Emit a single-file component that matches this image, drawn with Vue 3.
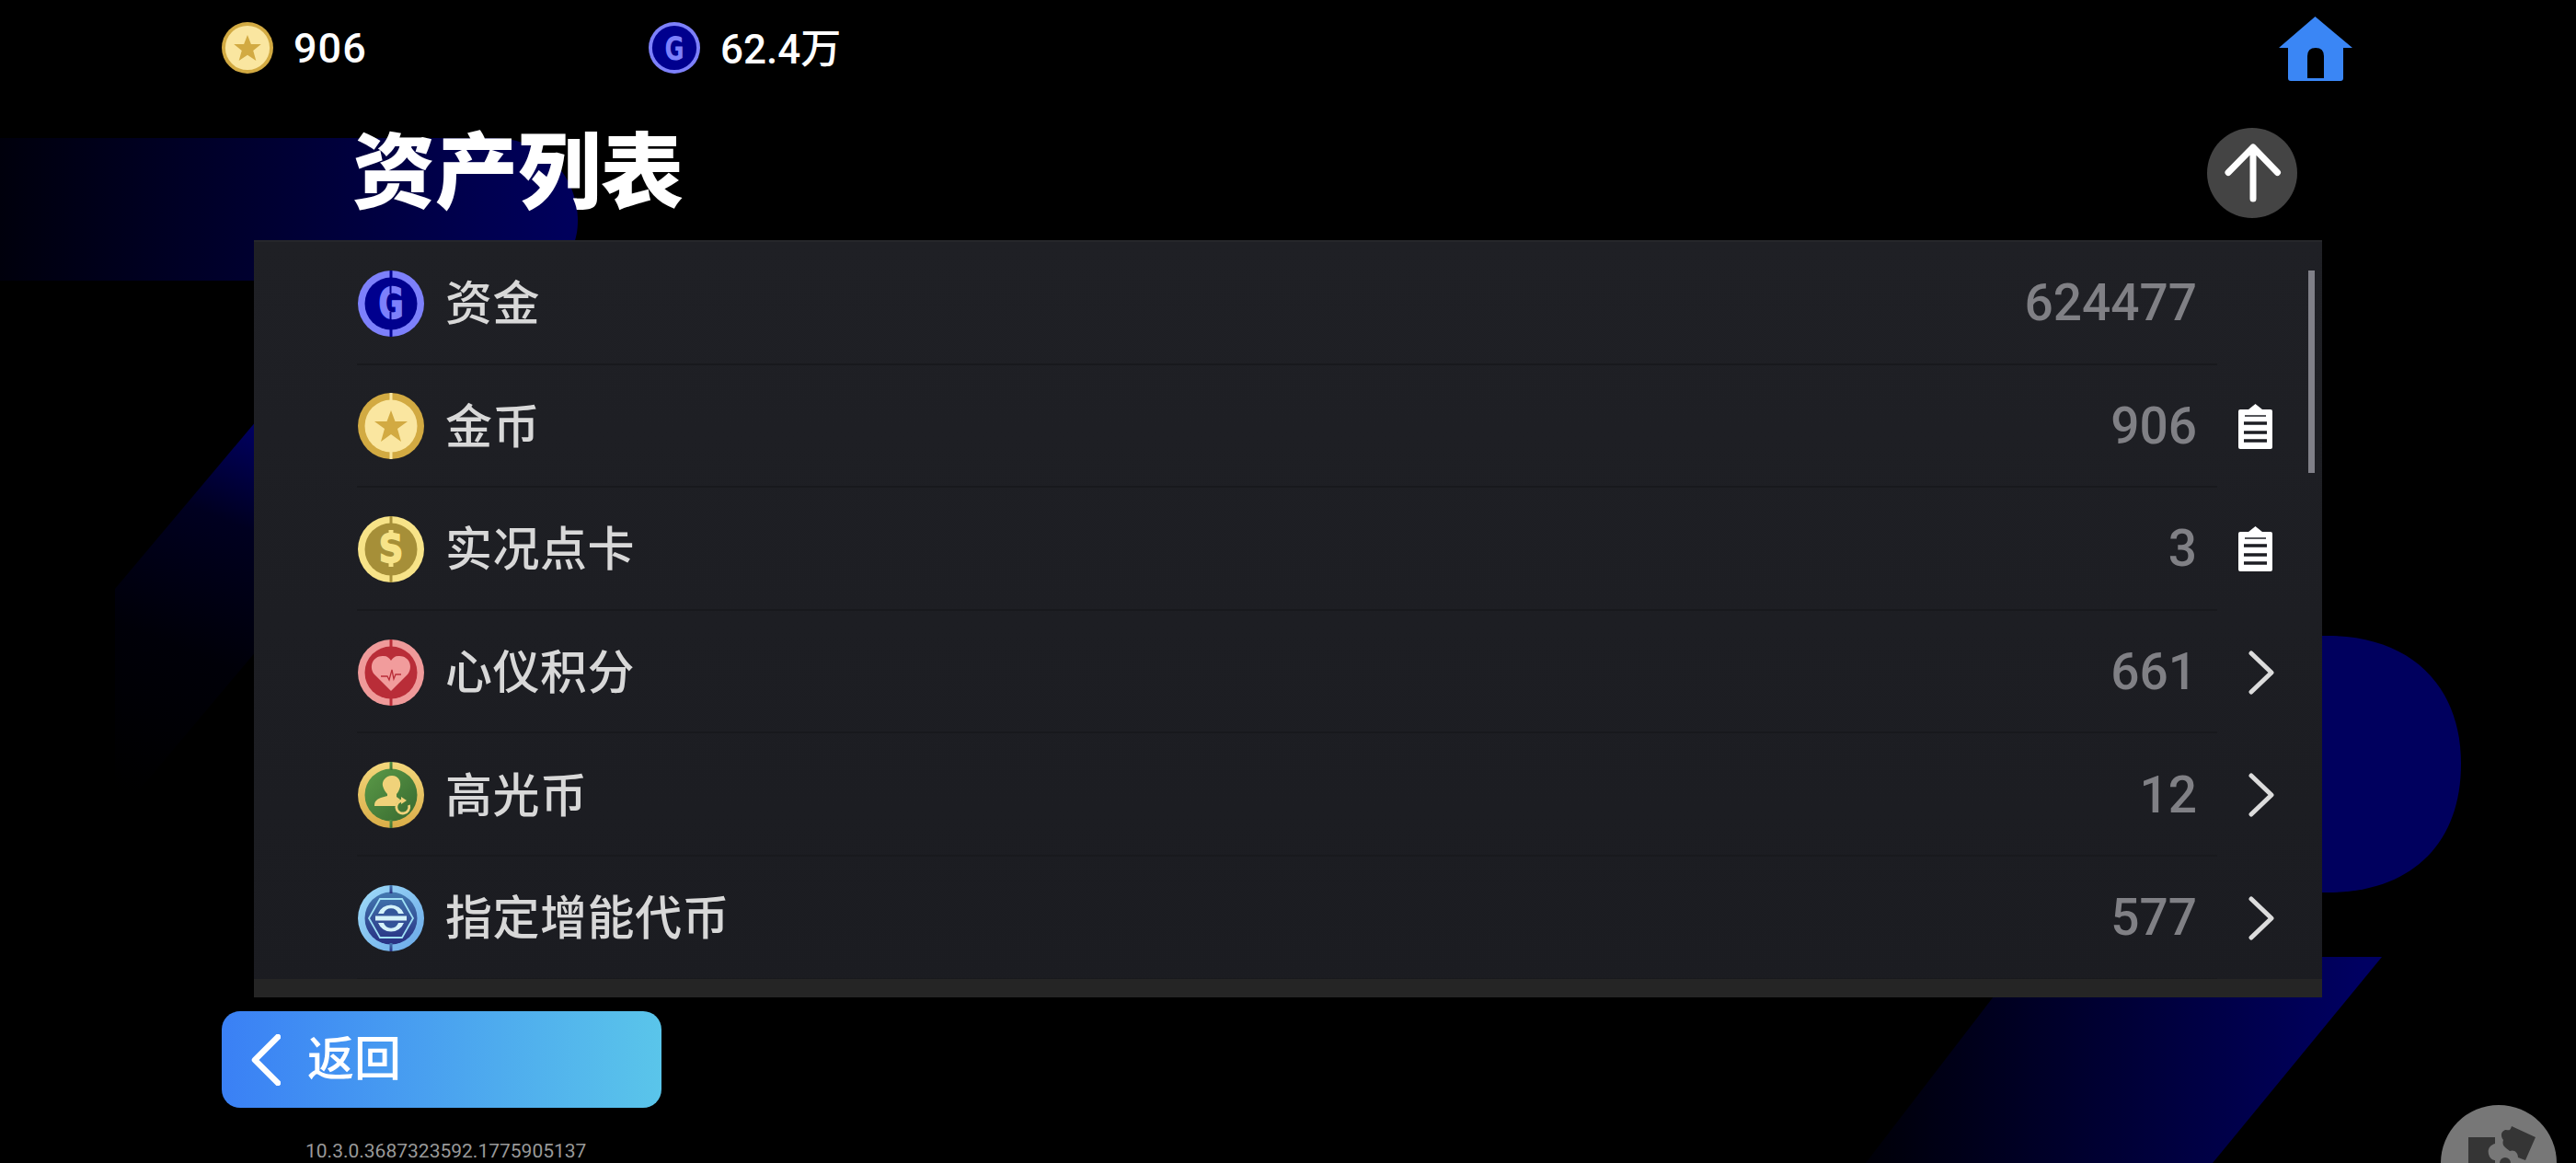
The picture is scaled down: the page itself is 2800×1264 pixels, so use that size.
<script setup>
const assets = [
  { name: '资金', value: '624477', icon: 'g', action: '' },
  { name: '金币', value: '906', icon: 'star', action: 'clip' },
  { name: '实况点卡', value: '3', icon: 'dollar', action: 'clip' },
  { name: '心仪积分', value: '661', icon: 'heart', action: 'more' },
  { name: '高光币', value: '12', icon: 'person', action: 'more' },
  { name: '指定增能代币', value: '577', icon: 'hex', action: 'more' },
]

const coinColors = {
  g: { ring: '#7d80fb', inner: '#00008e' },
  star: { ring: '#d2aa42', inner: '#fae6a0' },
  dollar: { ring: '#f7e388', inner: '#a68f38' },
  heart: { ring: '#ef9a9a', inner: '#b92d38' },
  person: { ring: 'url(#goldRing)', inner: 'url(#greenFill)' },
  hex: { ring: 'url(#blueRing)', inner: 'url(#blueFill)' },
}
</script>

<template>
  <div class="page">
    <svg class="backdrop" width="2800" height="1264" viewBox="0 0 2800 1264">
      <defs>
        <linearGradient id="bgTop" gradientUnits="userSpaceOnUse" x1="0" y1="0" x2="620" y2="0">
          <stop offset="0" stop-color="#00000c" />
          <stop offset="1" stop-color="#00005c" />
        </linearGradient>
        <linearGradient id="bgLeft" gradientUnits="userSpaceOnUse" x1="290" y1="470" x2="130" y2="860">
          <stop offset="0" stop-color="#000060" />
          <stop offset="0.25" stop-color="#000020" />
          <stop offset="0.6" stop-color="#000008" />
          <stop offset="1" stop-color="#000000" />
        </linearGradient>
        <linearGradient id="bgSlash" gradientUnits="userSpaceOnUse" x1="2030" y1="0" x2="2570" y2="0">
          <stop offset="0" stop-color="#000008" />
          <stop offset="1" stop-color="#000062" />
        </linearGradient>
      </defs>
      <path d="M0 150H535C595 150 628 195 628 240C628 280 600 305 560 305H0Z" fill="url(#bgTop)" />
      <path d="M125 640L300 432V682L125 890Z" fill="url(#bgLeft)" />
      <path d="M2400 691H2530C2620 691 2675 745 2675 830C2675 918 2620 970 2530 970H2400Z" fill="#00005e" />
      <path d="M2200 1040H2589L2405 1264H2028Z" fill="url(#bgSlash)" />
    </svg>

    <div class="content">
      <header class="topbar">
        <div class="stat stat-gold">
          <svg class="stat-icon" viewBox="0 0 72 72">
            <circle cx="36" cy="36" r="36" fill="#d2aa42" />
            <circle cx="36" cy="36" r="31" fill="#fae6a0" />
            <polygon points="36,18 41,31 55,31 44,40 48,54 36,46 24,54 28,40 17,31 31,31" fill="#d2aa42" />
          </svg>
          <span>906</span>
        </div>
        <div class="stat stat-cash">
          <svg class="stat-icon" viewBox="0 0 72 72">
            <circle cx="36" cy="36" r="36" fill="#7d80fb" />
            <circle cx="36" cy="36" r="31" fill="#00008e" />
            <text transform="translate(36 53) scale(0.72 1)" class="coin-letter" fill="#7d80fb">G</text>
          </svg>
          <span>62.4万</span>
        </div>
        <svg class="home" width="80" height="70" viewBox="0 0 80 70">
          <path d="M39.500 0L80 34H70V67Q70 70 67 70H13Q10 70 10 67V34H0Z" fill="#3a86f5" />
          <path d="M31 67V43Q31 34 40 34Q49 34 49 43V67Z" fill="#000" />
        </svg>
      </header>

      <div class="title-row">
        <h1>资产列表</h1>
        <button class="up-btn">
          <svg width="98" height="98" viewBox="0 0 98 98">
            <path d="M50 77V21M23 48.500L50 21L76.500 48.500" fill="none" stroke="#fff" stroke-width="7" stroke-linecap="round" stroke-linejoin="round" />
          </svg>
        </button>
      </div>

      <section class="panel">
        <div class="list">
          <div v-for="item in assets" :key="item.name" class="row">
            <svg class="coin" width="72" height="72" viewBox="0 0 72 72">
              <defs>
                <linearGradient id="goldRing" x1="0" y1="0" x2="0" y2="1">
                  <stop offset="0" stop-color="#f3d77c" />
                  <stop offset="1" stop-color="#d9ad48" />
                </linearGradient>
                <linearGradient id="greenFill" x1="0" y1="0" x2="1" y2="1">
                  <stop offset="0" stop-color="#5b9a48" />
                  <stop offset="1" stop-color="#37692f" />
                </linearGradient>
                <linearGradient id="blueRing" x1="0" y1="0" x2="1" y2="1">
                  <stop offset="0" stop-color="#a0dcf8" />
                  <stop offset="1" stop-color="#69a8e8" />
                </linearGradient>
                <linearGradient id="blueFill" x1="0" y1="0" x2="0" y2="1">
                  <stop offset="0" stop-color="#4379b0" />
                  <stop offset="1" stop-color="#282f82" />
                </linearGradient>
              </defs>
              <circle cx="36" cy="36" r="36" :fill="coinColors[item.icon].ring" />
              <circle cx="36" cy="36" r="28.500" :fill="coinColors[item.icon].inner" />
              <rect x="34.500" y="0" width="3" height="9" :fill="coinColors[item.icon].inner" />
              <rect x="34.500" y="63" width="3" height="9" :fill="coinColors[item.icon].inner" />

              <template v-if="item.icon === 'g'">
                <text transform="translate(36 52) scale(0.72 1)" class="coin-letter coin-thick" fill="#7d80fb" stroke="#7d80fb">G</text>
                <rect x="34.500" y="16" width="2" height="9" fill="#00008e" />
                <rect x="34.500" y="45" width="2" height="9" fill="#00008e" />
              </template>
              <polygon v-else-if="item.icon === 'star'" points="36,19 40.500,31 54,31 43,39 47,53 36,45 25,53 29,39 18,31 31.500,31" fill="#d2aa42" />
              <template v-else-if="item.icon === 'dollar'">
                <text transform="translate(36 50) scale(0.86 1)" class="coin-letter coin-s coin-thick" fill="#f7e388" stroke="#f7e388">S</text>
                <rect x="33.500" y="15" width="5" height="5" fill="#f7e388" />
                <rect x="33.500" y="50" width="5" height="5" fill="#f7e388" />
              </template>
              <template v-else-if="item.icon === 'heart'">
                <path d="M36 56L18 38C11 29 17 17 28 18C32 18 34 20 36 23C38 20 40 18 44 18C55 17 61 29 54 38Z" fill="#f19c9c" />
                <path d="M25 40H32L34 44L37 33L39 43L41 38H47" fill="none" stroke="#b92d38" stroke-width="1.300" />
              </template>
              <template v-else-if="item.icon === 'person'">
                <path d="M37 15C44 15 47 21 46 27C45 31 43 34 42 35V38L46 41C42 44 41 46 41 48H18C18 43 20 41 25 39L32 37V35C30 33 28 30 27 26C26 21 30 15 37 15Z" fill="#f0d27a" />
                <path d="M55.500 47A7 7 0 1 1 49 42" fill="none" stroke="#f0d27a" stroke-width="2.800" />
                <path d="M47 38L53 42L47 46Z" fill="#f0d27a" />
              </template>
              <template v-else-if="item.icon === 'hex'">
                <polygon points="24,15 48,15 60,36 48,57 24,57 12,36" fill="none" stroke="#9fe0f5" stroke-width="1.800" />
                <path d="M22 31A15 15 0 0 1 50 31ZM22 41A15 15 0 0 0 50 41Z" fill="#d5f2fa" />
                <path d="M28 31A8.500 8.500 0 0 1 44 31ZM28 41A8.500 8.500 0 0 0 44 41Z" fill="#33559a" />
                <rect x="19" y="33.500" width="34" height="5" fill="#d5f2fa" />
              </template>
            </svg>
            <span class="name">{{ item.name }}</span>
            <span class="value">{{ item.value }}</span>
            <span class="action">
              <svg v-if="item.action === 'clip'" class="clip" width="37" height="49" viewBox="0 0 37 49">
                <path d="M2 6H11L18.500 0L26 6H35Q37 6 37 8V47Q37 49 35 49H2Q0 49 0 47V8Q0 6 2 6Z" fill="#fff" />
                <path d="M6 21H31M6 31H31M6 40H31" stroke="#1d1e23" stroke-width="3.500" />
                <path d="M7 13H30" stroke="#1d1e23" stroke-width="1.500" />
              </svg>
              <svg v-else-if="item.action === 'more'" width="28" height="48" viewBox="0 0 28 48">
                <path d="M3 3L25 24L3 45" fill="none" stroke="#dcdcdc" stroke-width="5" stroke-linecap="round" stroke-linejoin="round" />
              </svg>
            </span>
          </div>
        </div>
        <div class="panel-foot"></div>
        <div class="scrollbar"></div>
      </section>

      <button class="back-btn">
        <svg width="32" height="56" viewBox="0 0 32 56">
          <path d="M29 3L4 28L29 53" fill="none" stroke="#fff" stroke-width="6.500" stroke-linecap="round" stroke-linejoin="round" />
        </svg>
        <span>返回</span>
      </button>
      <div class="version">10.3.0.3687323592.1775905137</div>
    </div>

    <div class="puzzle">
      <svg width="126" height="126" viewBox="0 0 126 126">
        <path d="M30 35H59V42C52 44 50 50 53 56C55 60 59 60 59 60V92H30Z" fill="#353535" />
        <path d="M77 23L103 35L92 60L84 57C84 52 80 48 75 50C70 46 66 44 68 38C65 34 65 29 70 27C74 27 75 29 77 23Z" fill="#353535" />
        <circle cx="70" cy="63" r="6" fill="#353535" />
      </svg>
    </div>
  </div>
</template>

<style>
body {
  background: #000;
}
</style>

<style scoped>
.page {
  position: relative;
  width: 2800px;
  height: 1264px;
  overflow: hidden;
  background: #000;
  font-family: "Noto Sans CJK SC", "Noto Sans", sans-serif;
}

.backdrop {
  position: absolute;
  left: 0;
  top: 0;
}

.content {
  position: relative;
  display: flex;
  flex-direction: column;
  width: 2316px;
  height: 1264px;
  margin-left: 241px;
}

.topbar {
  display: flex;
  align-items: center;
  height: 104px;
}

.stat {
  display: flex;
  align-items: center;
  gap: 22px;
  color: #fff;
  font-family: Roboto, "Noto Sans CJK SC", sans-serif;
  font-size: 45px;
  font-weight: 500;
  letter-spacing: 1px;
}

.stat-gold {
  width: 464px;
}

.stat-cash {
  font-size: 44px;
  letter-spacing: 0;
}

.stat-cash span {
  margin-bottom: 4px;
}

.stat-icon {
  width: 56px;
  height: 56px;
}

.coin-letter {
  font-family: "DejaVu Sans", sans-serif;
  font-size: 46px;
  font-weight: 700;
  text-anchor: middle;
}

.coin-thick {
  stroke-width: 1.500px;
}

.coin-s {
  font-size: 43px;
}

.home {
  margin-left: auto;
  margin-top: 2px;
}

.title-row {
  display: flex;
  align-items: center;
  justify-content: space-between;
  height: 157px;
  padding: 0 60px 0 142px;
}

h1 {
  margin: 0 0 6px;
  color: #fff;
  font-size: 90px;
  font-weight: 900;
  line-height: 1;
}

.up-btn {
  width: 98px;
  height: 98px;
  margin-top: 10px;
  padding: 0;
  border: 0;
  border-radius: 50%;
  background: #444;
}

.up-btn svg {
  display: block;
}

.panel {
  position: relative;
  width: 2248px;
  height: 823px;
  margin-left: 35px;
  border-top: 2px solid #26272b;
  background: linear-gradient(#1f2025, #1b1c21);
  box-sizing: border-box;
}

.list {
  height: 801px;
  padding-left: 112px;
}

.row {
  display: flex;
  align-items: center;
  width: 2092px;
  height: 133.600px;
  box-sizing: border-box;
  background: linear-gradient(#18191d, #18191d) left bottom / 2022px 2px no-repeat;
}

.coin {
  flex: none;
  margin: 0 23px 0 1px;
}

.name {
  margin-bottom: 6px;
  color: #d8d8d8;
  font-size: 51px;
  font-weight: 500;
  line-height: 1;
  letter-spacing: 0.5px;
}

.value {
  margin-left: auto;
  color: #808085;
  font-family: Roboto, sans-serif;
  font-size: 55px;
  font-weight: 500;
  line-height: 1;
}

.action {
  display: flex;
  justify-content: flex-end;
  align-items: center;
  width: 84px;
  margin-right: 8px;
  height: 50px;
}

.clip {
  margin-right: 2px;
}

.panel-foot {
  height: 20px;
  background: #252525;
}

.scrollbar {
  position: absolute;
  top: 31px;
  right: 8px;
  width: 7px;
  height: 220px;
  background: #808088;
}

.back-btn {
  display: flex;
  align-items: center;
  flex: none;
  gap: 29px;
  width: 478px;
  height: 105px;
  margin-top: 15px;
  padding: 0 0 0 32px;
  border: 0;
  border-radius: 20px;
  background: linear-gradient(90deg, #3a80f5, #5ac5ea);
  color: #fff;
  font-family: inherit;
  font-size: 51px;
  font-weight: 500;
  text-align: left;
}

.back-btn span {
  margin-bottom: 9px;
}

.version {
  margin: 35px 0 0 91px;
  color: #999;
  font-family: Roboto, sans-serif;
  font-size: 21px;
  line-height: 24px;
}

.puzzle {
  position: absolute;
  left: 2653px;
  top: 1201px;
  width: 126px;
  height: 126px;
  border-radius: 50%;
  background: #777;
}

.puzzle svg {
  display: block;
}
</style>
